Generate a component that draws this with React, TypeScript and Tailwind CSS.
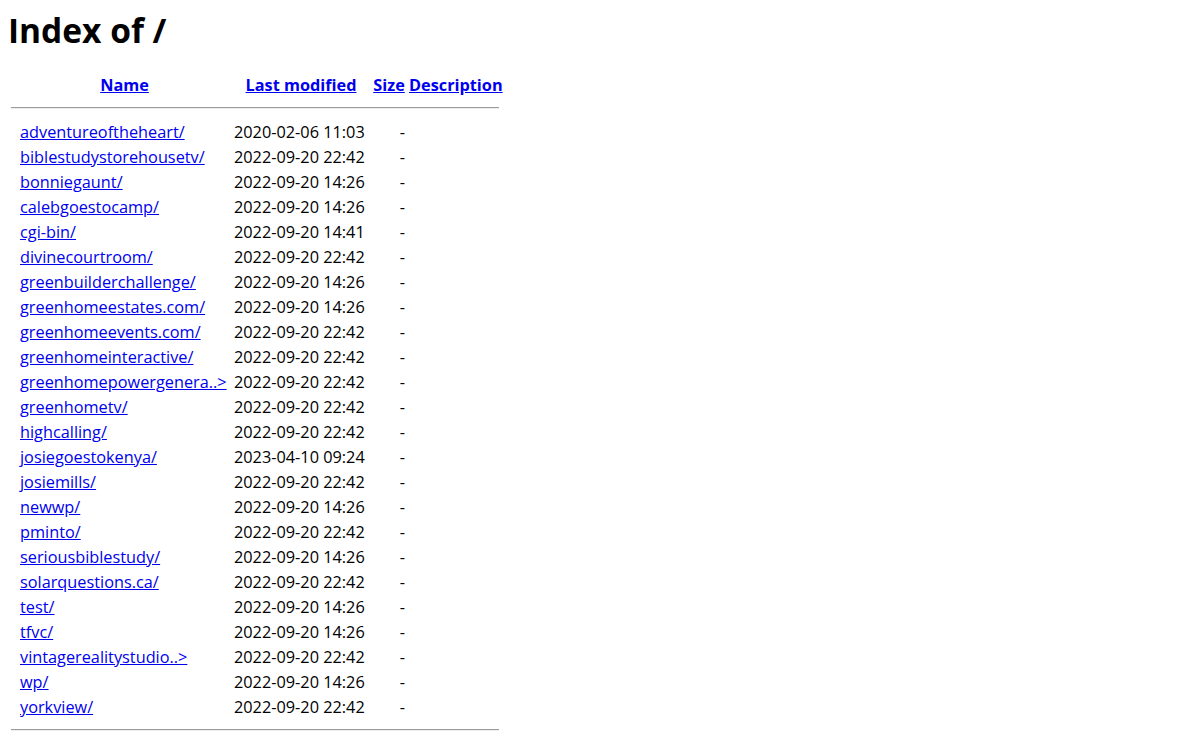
const rows: [string, string][] = [
  ["adventureoftheheart/", "2020-02-06 11:03"],
  ["biblestudystorehousetv/", "2022-09-20 22:42"],
  ["bonniegaunt/", "2022-09-20 14:26"],
  ["calebgoestocamp/", "2022-09-20 14:26"],
  ["cgi-bin/", "2022-09-20 14:41"],
  ["divinecourtroom/", "2022-09-20 22:42"],
  ["greenbuilderchallenge/", "2022-09-20 14:26"],
  ["greenhomeestates.com/", "2022-09-20 14:26"],
  ["greenhomeevents.com/", "2022-09-20 22:42"],
  ["greenhomeinteractive/", "2022-09-20 22:42"],
  ["greenhomepowergenera..>", "2022-09-20 22:42"],
  ["greenhometv/", "2022-09-20 22:42"],
  ["highcalling/", "2022-09-20 22:42"],
  ["josiegoestokenya/", "2023-04-10 09:24"],
  ["josiemills/", "2022-09-20 22:42"],
  ["newwp/", "2022-09-20 14:26"],
  ["pminto/", "2022-09-20 22:42"],
  ["seriousbiblestudy/", "2022-09-20 14:26"],
  ["solarquestions.ca/", "2022-09-20 22:42"],
  ["test/", "2022-09-20 14:26"],
  ["tfvc/", "2022-09-20 14:26"],
  ["vintagerealitystudio..>", "2022-09-20 22:42"],
  ["wp/", "2022-09-20 14:26"],
  ["yorkview/", "2022-09-20 22:42"],
];

function Rule() {
  return (
    <tr>
      <th colSpan={5} className="p-px">
        <hr className="mt-[7px] mb-[9px] h-0 border-t border-b border-t-[#9a9a9a] border-b-[#eeeeee]" />
      </th>
    </tr>
  );
}

export default function App() {
  return (
    <div className="min-h-[740px] bg-white px-2 pt-[9px] text-[16.3px] text-black [font-family:'Open_Sans','Noto_Sans_CJK_SC',sans-serif]">
      <h1 className="text-[33.5px] font-bold leading-[42px]">Index of /</h1>
      <table className="mt-[21px] table-fixed border-separate border-spacing-[2px] w-[494px] leading-[21px]">
        <tbody>
          <tr>
            <th className="w-[7px] p-px" />
            <th className="w-[211px] p-px text-center">
              <a href="#" className="text-[#0000ee] underline">Name</a>
            </th>
            <th className="w-[138px] p-px text-center">
              <a href="#" className="text-[#0000ee] underline">Last modified</a>
            </th>
            <th className="w-[34px] p-px text-center">
              <a href="#" className="text-[#0000ee] underline">Size</a>
            </th>
            <th className="w-[92px] p-px text-center">
              <a href="#" className="text-[#0000ee] underline">Description</a>
            </th>
          </tr>
          <Rule />
          {rows.map(([name, date]) => (
            <tr key={name}>
              <td className="p-px">&nbsp;</td>
              <td className="p-px whitespace-nowrap">
                <a href="#" className="text-[#0000ee] underline">{name}</a>
              </td>
              <td className="p-px pl-[2px] whitespace-nowrap">{date}</td>
              <td className="p-px text-right">-</td>
              <td className="p-px">&nbsp;</td>
            </tr>
          ))}
          <Rule />
        </tbody>
      </table>
    </div>
  );
}
